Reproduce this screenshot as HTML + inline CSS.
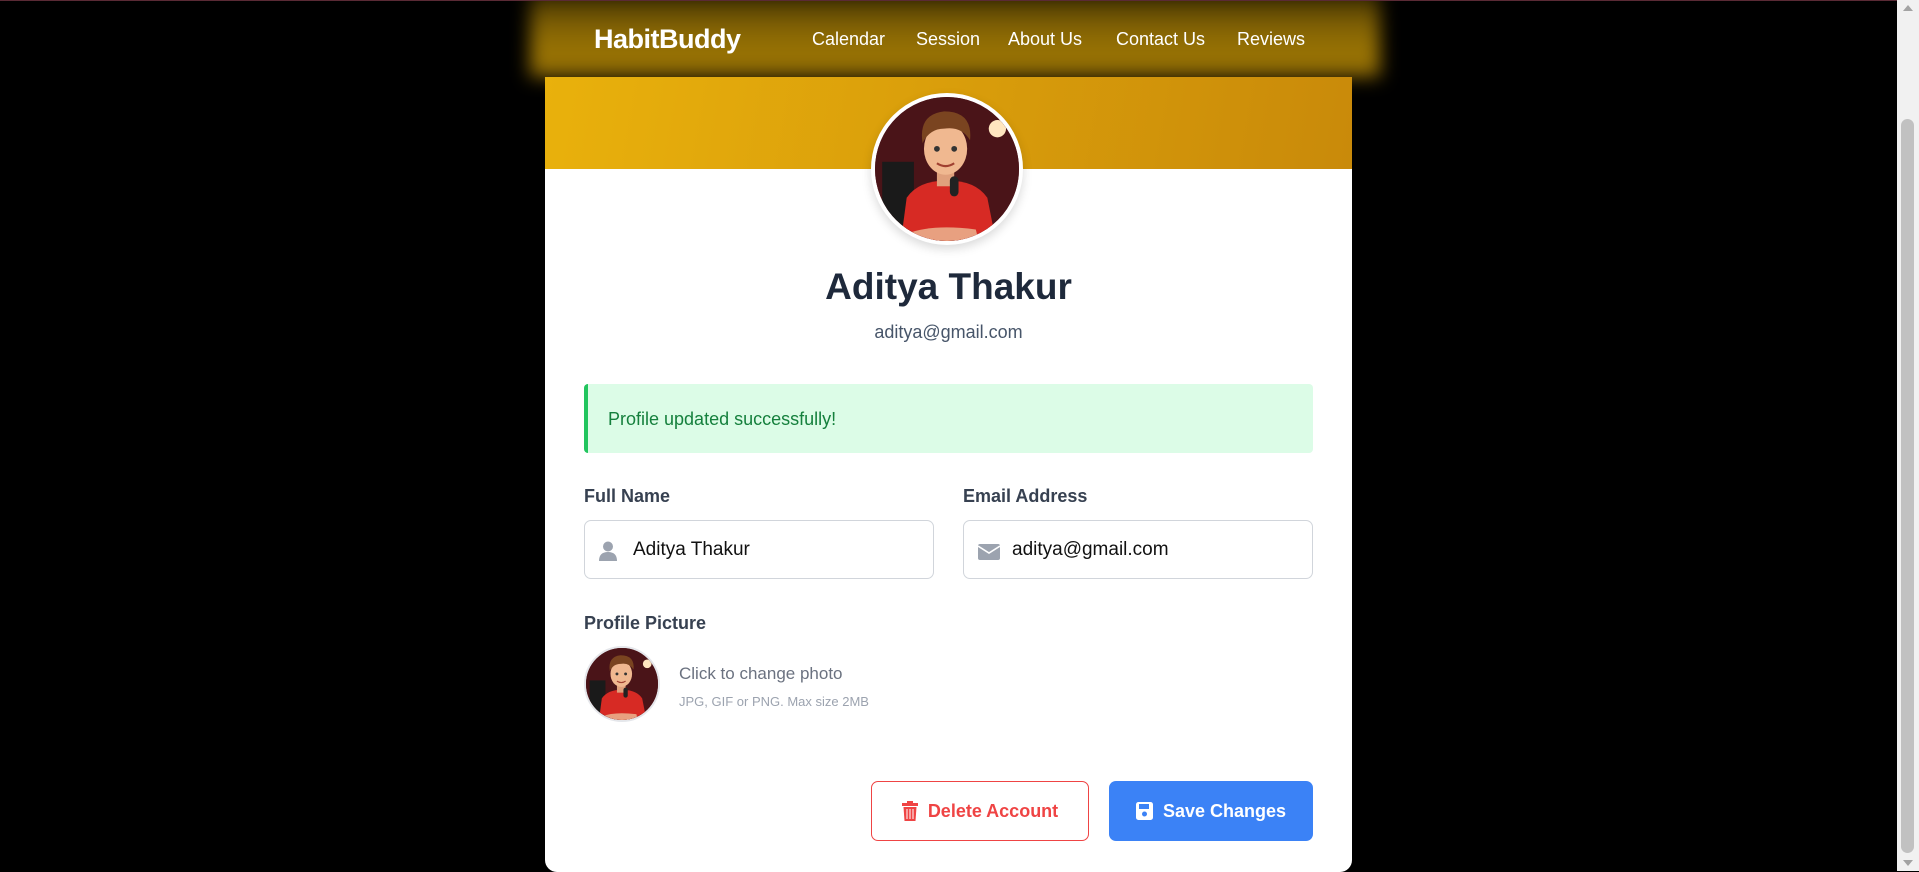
<!DOCTYPE html>
<html><head><meta charset="utf-8"><style>
*{margin:0;padding:0;box-sizing:border-box}
body{width:1919px;height:871px;background:#000;font-family:"Liberation Sans",sans-serif;position:relative;overflow:hidden}
.topline{position:absolute;left:0;top:0;width:1919px;height:1px;background:#5a2a35}
.nav{position:absolute;left:530px;top:-10px;width:850px;height:87px;background:linear-gradient(180deg,#2a2000 0%,#7a5c04 35%,#9a7404 70%,#8c6806 100%);filter:blur(9px)}
.navbar2{position:absolute;left:545px;top:30px;width:807px;height:47px;background:linear-gradient(180deg,#8a6804,#957106 60%,#8d6a06)}
.brand{position:absolute;left:594px;top:24px;color:#fff;font-weight:bold;font-size:27px;letter-spacing:-0.5px}
.link{position:absolute;top:29px;color:#fff;font-size:18px}
.card{position:absolute;left:545px;top:77px;width:807px;height:795px;background:#fff;border-radius:0 0 12px 12px;overflow:hidden}
.banner{height:92px;background:linear-gradient(100deg,#e9b10c,#c98a0a)}
.av{position:absolute;left:871px;top:93px;width:152px;height:152px;border-radius:50%;border:4px solid #fff;overflow:hidden;box-shadow:0 4px 10px rgba(0,0,0,.15);background:#5a1a20}
.name{position:absolute;left:545px;width:807px;top:266px;text-align:center;font-size:37px;font-weight:bold;color:#1e293b}
.email{position:absolute;left:545px;width:807px;top:322px;text-align:center;font-size:18px;color:#475569}
.alert{position:absolute;left:584px;top:384px;width:729px;height:69px;background:#dcfce7;border-left:4px solid #22c55e;border-radius:4px;color:#15803d;font-size:18px;padding:26px 0 0 20px;line-height:1}
.lbl{position:absolute;font-size:18px;font-weight:bold;color:#374151}
.inp{position:absolute;top:520px;width:350px;height:59px;border:1px solid #d1d5db;border-radius:7px;font-size:19px;color:#111}
.inp span{position:absolute;left:48px;top:18px}
.inp svg{position:absolute;left:14px;top:20px}
.sav{position:absolute;left:584px;top:646px;width:76px;height:76px;border-radius:50%;border:2px solid #e5e7eb;overflow:hidden;background:#5a1a20}
.btn{position:absolute;top:781px;height:60px;border-radius:7px;font-size:18px;font-weight:bold;display:flex;align-items:center;justify-content:center;gap:10px}
.sb{position:absolute;left:1897px;top:0;width:22px;height:871px;background:#f1f1f1}
.thumb{position:absolute;left:1901px;top:119px;width:13px;height:734px;background:#c1c1c1;border-radius:7px}
</style></head><body>
<div class="nav"></div>
<div class="topline"></div>
<div class="brand">HabitBuddy</div>
<div class="link" style="left:812px">Calendar</div>
<div class="link" style="left:916px">Session</div>
<div class="link" style="left:1008px">About Us</div>
<div class="link" style="left:1116px">Contact Us</div>
<div class="link" style="left:1237px">Reviews</div>

<div class="card"><div class="banner"></div></div>

<svg width="0" height="0" style="position:absolute"><defs>
<symbol id="boy" viewBox="0 0 100 100">
<rect width="100" height="100" fill="#4a1418"/>
<circle cx="85" cy="22" r="6" fill="#ffe6c0"/>
<rect x="5" y="45" width="22" height="55" fill="#1a1a1a"/>
<path d="M18 100 L22 70 Q30 58 50 58 Q70 58 78 70 L84 100Z" fill="#d72a24"/>
<path d="M22 95 Q40 88 70 92 L72 100 L20 100Z" fill="#e8a080"/>
<rect x="43" y="48" width="12" height="14" fill="#e0a07c"/>
<ellipse cx="49" cy="36" rx="15" ry="18" fill="#f0b890"/>
<path d="M33 32 Q30 12 48 10 Q68 10 66 30 Q60 20 48 22 Q38 22 33 32Z" fill="#7a4420"/>
<circle cx="43" cy="36" r="2" fill="#333"/><circle cx="55" cy="36" r="2" fill="#333"/>
<path d="M43 46 Q49 50 55 46" stroke="#a04030" stroke-width="1.5" fill="none"/>
<rect x="52" y="55" width="6" height="14" rx="3" fill="#222"/>
</symbol></defs></svg>
<div class="av"><svg width="144" height="144"><use href="#boy"/></svg></div>
<div class="name">Aditya Thakur</div>
<div class="email">aditya@gmail.com</div>
<div class="alert">Profile updated successfully!</div>
<div class="lbl" style="left:584px;top:486px">Full Name</div>
<div class="lbl" style="left:963px;top:486px">Email Address</div>
<div class="inp" style="left:584px"><svg width="18" height="20" viewBox="0 0 18 20"><circle cx="9" cy="5.5" r="5" fill="#9ca3af"/><path d="M0 20 Q0 11 9 11 Q18 11 18 20Z" fill="#9ca3af"/></svg><span>Aditya Thakur</span></div>
<div class="inp" style="left:963px"><svg width="22" height="18" viewBox="0 0 22 18" style="top:22px"><rect x="0" y="1" width="22" height="16" rx="2" fill="#9ca3af"/><path d="M0 3 L11 10 L22 3" stroke="#fff" stroke-width="1.6" fill="none"/></svg><span>aditya@gmail.com</span></div>
<div class="lbl" style="left:584px;top:613px">Profile Picture</div>
<div class="sav"><svg width="72" height="72"><use href="#boy"/></svg></div>
<div style="position:absolute;left:679px;top:664px;font-size:17px;color:#6b7280">Click to change photo</div>
<div style="position:absolute;left:679px;top:694px;font-size:13px;color:#9ca3af">JPG, GIF or PNG. Max size 2MB</div>
<div class="btn" style="left:871px;width:218px;border:1px solid #ef4444;color:#ef4444;background:#fff"><svg width="16" height="20" viewBox="0 0 16 20"><rect x="0" y="2" width="16" height="3" fill="#ef4444"/><rect x="5" y="0" width="6" height="3" fill="#ef4444"/><path d="M1.5 6 H14.5 L13.5 20 H2.5Z" fill="#ef4444"/><path d="M5 8v10M8 8v10M11 8v10" stroke="#fff" stroke-width="1"/></svg>Delete Account</div>
<div class="btn" style="left:1109px;width:204px;background:#3b82f6;color:#fff"><svg width="17" height="18" viewBox="0 0 17 18"><rect width="17" height="18" rx="2.5" fill="#fff"/><rect x="3" y="2" width="10" height="5" fill="#3b82f6"/><circle cx="8.5" cy="12" r="2.5" fill="#3b82f6"/></svg>Save Changes</div>
<div class="sb"></div><div class="thumb"></div>
<div style="position:absolute;left:1903px;top:5px;border:5px solid transparent;border-bottom:6px solid #a3a3a3;border-top:0"></div>
<div style="position:absolute;left:1903px;top:860px;border:5px solid transparent;border-top:6px solid #a3a3a3;border-bottom:0"></div>
</body></html>
